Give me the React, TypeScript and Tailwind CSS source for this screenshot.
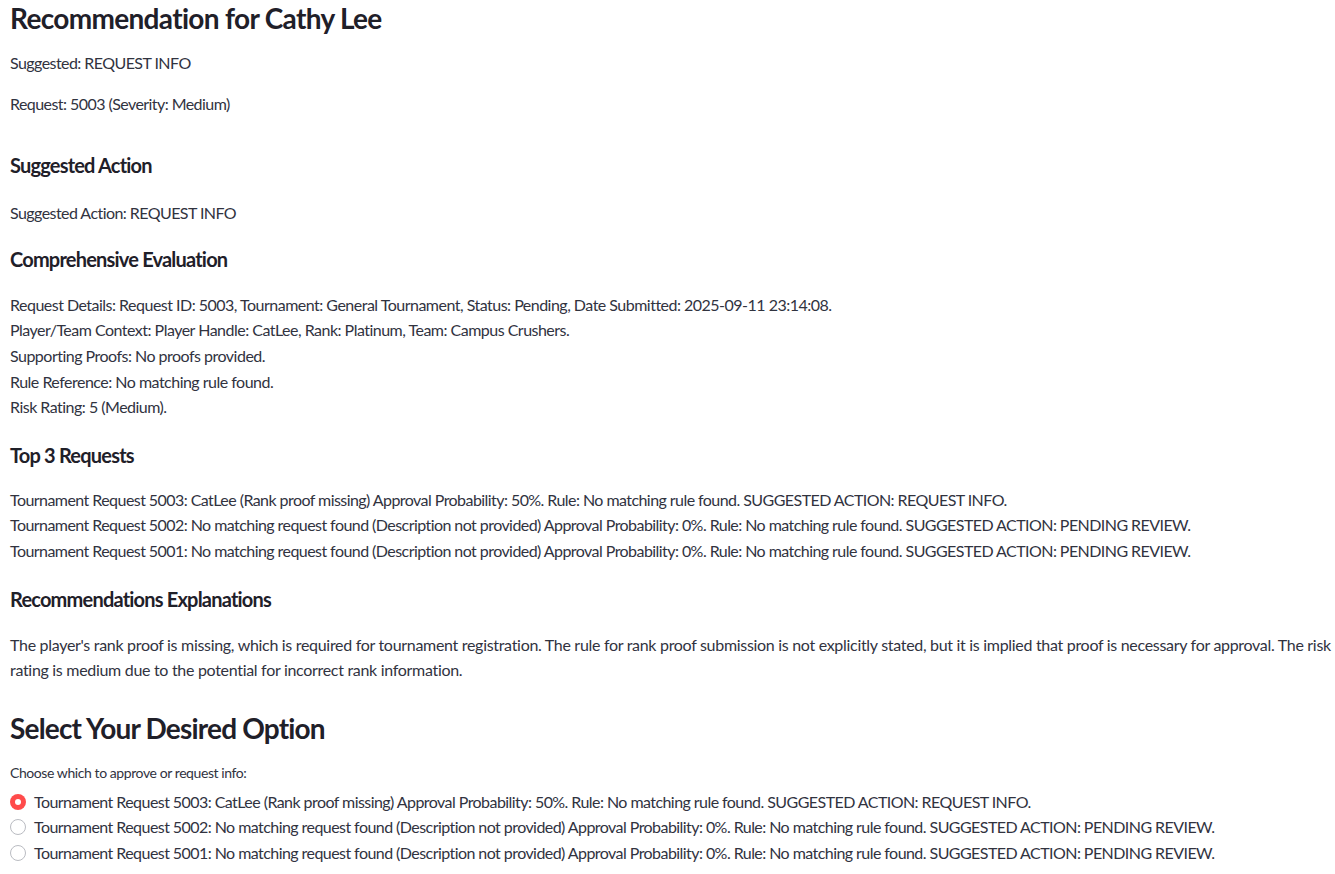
const requests = [
  "Tournament Request 5003: CatLee (Rank proof missing) Approval Probability: 50%. Rule: No matching rule found. SUGGESTED ACTION: REQUEST INFO.",
  "Tournament Request 5002: No matching request found (Description not provided) Approval Probability: 0%. Rule: No matching rule found. SUGGESTED ACTION: PENDING REVIEW.",
  "Tournament Request 5001: No matching request found (Description not provided) Approval Probability: 0%. Rule: No matching rule found. SUGGESTED ACTION: PENDING REVIEW.",
];

const evaluation = [
  "Request Details: Request ID: 5003, Tournament: General Tournament, Status: Pending, Date Submitted: 2025-09-11 23:14:08.",
  "Player/Team Context: Player Handle: CatLee, Rank: Platinum, Team: Campus Crushers.",
  "Supporting Proofs: No proofs provided.",
  "Rule Reference: No matching rule found.",
  "Risk Rating: 5 (Medium).",
];

function SectionTitle({ children, className = "" }: { children: React.ReactNode; className?: string }) {
  return (
    <h4 className={`text-[20px] font-bold leading-[24px] tracking-[-0.04em] text-[#1f2029] ${className}`}>
      {children}
    </h4>
  );
}

export default function App() {
  const selected = 0;

  return (
    <div className="min-h-[874px] bg-white pl-[10px] pt-px text-[16px] tracking-[-0.035em] text-[#31333f] [font-family:Lato,'Noto_Sans',sans-serif]">
      <h3 className="text-[28px] font-bold leading-[34px] tracking-[-0.024em] text-[#1f2029]">Recommendation for Cathy Lee</h3>
      <p className="mt-[15px] leading-[25.6px]">Suggested: REQUEST INFO</p>
      <p className="mt-[15px] leading-[25.6px]">Request: 5003 (Severity: Medium)</p>

      <SectionTitle className="mt-[37px]">Suggested Action</SectionTitle>
      <p className="mt-[23px] leading-[25.6px]">Suggested Action: REQUEST INFO</p>

      <SectionTitle className="mt-[21px]">Comprehensive Evaluation</SectionTitle>
      <div className="mt-[21px] leading-[25.6px] tracking-[-0.032em]">
        {evaluation.map(line => (
          <p key={line}>{line}</p>
        ))}
      </div>

      <SectionTitle className="mt-[23px]">Top 3 Requests</SectionTitle>
      <div className="mt-[20px] leading-[25.6px]">
        {requests.map(line => (
          <p key={line}>{line}</p>
        ))}
      </div>

      <SectionTitle className="mt-[23px]">Recommendations Explanations</SectionTitle>
      <p className="mt-[21px] leading-[25.6px] tracking-[-0.019em]">
        The player's rank proof is missing, which is required for tournament registration. The rule for rank proof submission is not explicitly stated, but it is implied that proof is necessary for approval. The risk rating is medium due to the potential for incorrect rank information.
      </p>

      <h3 className="mt-[28px] text-[28px] font-bold leading-[34px] tracking-[-0.029em] text-[#1f2029]">Select Your Desired Option</h3>
      <p className="mt-[17px] text-[14px] leading-[22px] tracking-[-0.03em]">Choose which to approve or request info:</p>
      <div className="mt-[5px] flex flex-col">
        {requests.map((line, i) => (
          <label key={line} className="flex h-[25.6px] items-center gap-[8px]">
            {i === selected ? (
              <span className="flex h-[16px] w-[16px] items-center justify-center rounded-full bg-[#ff4b4b]">
                <span className="h-[6px] w-[6px] rounded-full bg-white" />
              </span>
            ) : (
              <span className="h-[16px] w-[16px] rounded-full border border-[#babcc2] bg-white" />
            )}
            <span className="leading-[25.6px]">{line}</span>
          </label>
        ))}
      </div>
    </div>
  );
}
